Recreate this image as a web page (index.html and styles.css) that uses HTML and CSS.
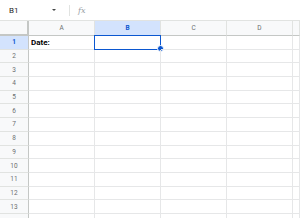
FILE: index.html
```html
<!DOCTYPE html>
<html lang="en">
<head>
    <meta charset="UTF-8">
    <title>Sheet</title>
    <link rel="stylesheet" href="styles.css">
</head>
<body>
    <div class="formula-bar">
        <div class="name-box">
            <span class="cell-ref">B1</span>
            <span class="drop-arrow"></span>
        </div>
        <div class="bar-sep"></div>
        <span class="fx">fx</span>
    </div>

    <div class="grid" id="grid"></div>

<script>
const cols = ['A', 'B', 'C', 'D', ''];
const grid = document.getElementById('grid');

function cell(cls, text) {
    const d = document.createElement('div');
    d.className = cls;
    if (text) d.textContent = text;
    grid.appendChild(d);
    return d;
}

cell('corner');
cols.forEach(c => cell('col-head' + (c === 'B' ? ' active' : ''), c));

// 13 visible rows, plus a sliver of the next one
for (let r = 1; r <= 14; r++) {
    cell('row-head' + (r === 1 ? ' active' : ''), r < 14 ? r : '');
    cols.forEach(c => {
        const d = cell('cell', r === 1 && c === 'A' ? 'Date:' : '');
        if (r === 1 && c === 'B') {
            d.classList.add('selected');
            const h = document.createElement('span');
            h.className = 'handle';
            d.appendChild(h);
        }
    });
}
</script>
</body>
</html>
```

FILE: styles.css
```css
body {
    margin: 0;
    font-family: Roboto, Arial, sans-serif;
    background-color: #fff;
    overflow: hidden;
}

.formula-bar {
    height: 20px;
    display: flex;
    align-items: center;
    border-bottom: 1px solid #e1e3e1;
}

.name-box {
    width: 62px;
    display: flex;
    align-items: center;
    justify-content: space-between;
    padding-left: 9px;
    padding-right: 6px;
    box-sizing: border-box;
}

.cell-ref {
    font-size: 8px;
    color: #1f1f1f;
}

.drop-arrow {
    width: 0;
    height: 0;
    border-left: 2.5px solid transparent;
    border-right: 2.5px solid transparent;
    border-top: 2.5px solid #444746;
}

.bar-sep {
    width: 1px;
    height: 11px;
    background-color: #e1e3e1;
    margin-left: 7px;
}

.fx {
    margin-left: 8px;
    font-family: "DejaVu Serif", serif;
    font-style: italic;
    font-size: 8px;
    color: #9aa0a6;
}

.grid {
    display: grid;
    grid-template-columns: 29px repeat(4, 66px) 7px;
    grid-template-rows: 15px;
    grid-auto-rows: 13.7px;
    width: 300px;
    overflow: hidden;
}

.corner,
.col-head,
.row-head {
    background-color: #f8f9fa;
    color: #6b6e70;
    font-size: 6.5px;
    display: flex;
    align-items: center;
    justify-content: center;
    box-sizing: border-box;
}

.corner {
    border-right: 2px solid #c4c7c5;
    border-bottom: 2px solid #c4c7c5;
}

.col-head {
    border-right: 1px solid #e1e3e1;
    border-bottom: 1px solid #c4c7c5;
}

.row-head {
    border-bottom: 1px solid #e1e3e1;
    border-right: 1px solid #c4c7c5;
}

.col-head.active,
.row-head.active {
    background-color: #d3e3fd;
    color: #0b57d0;
    font-weight: bold;
}

.cell {
    border-right: 1px solid #e6e7e8;
    border-bottom: 1px solid #e6e7e8;
    box-sizing: border-box;
    font-size: 8px;
    font-weight: bold;
    color: #000;
    padding-left: 2px;
    display: flex;
    align-items: center;
    position: relative;
}

.cell.selected {
    border: 1.5px solid #0b57d0;
    margin: -1px 0 0 -1px;
}

.handle {
    position: absolute;
    right: -3.5px;
    bottom: -3.5px;
    width: 5px;
    height: 5px;
    border-radius: 50%;
    background-color: #0b57d0;
    border: 0.5px solid #fff;
}
```
